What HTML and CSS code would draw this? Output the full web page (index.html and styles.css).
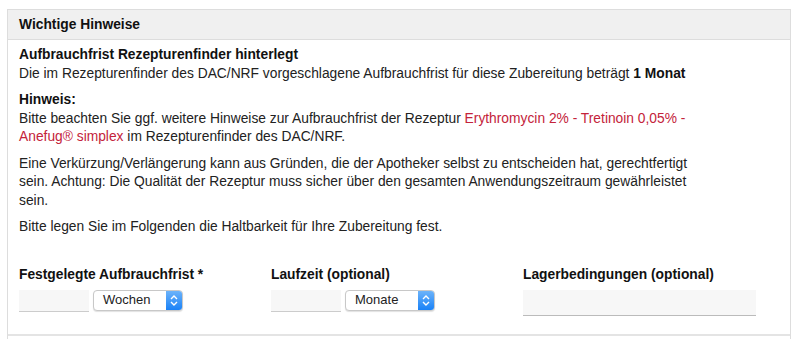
FILE: index.html
```html
<!DOCTYPE html>
<html lang="de">
<head>
  <meta charset="UTF-8" />
  <meta name="viewport" content="width=device-width, initial-scale=1.0">
  <title>Wichtige Hinweise</title>
  <link rel="stylesheet" href="styles.css">
</head>
<body>
  <div class="panel">
    <div class="panel-head">Wichtige Hinweise</div>

    <div class="panel-body">
      <p>
        <strong>Aufbrauchfrist Rezepturenfinder hinterlegt</strong><br>
        Die im Rezepturenfinder des DAC/NRF vorgeschlagene Aufbrauchfrist für diese Zubereitung beträgt <strong>1 Monat</strong>
      </p>

      <p>
        <strong>Hinweis:</strong><br>
        Bitte beachten Sie ggf. weitere Hinweise zur Aufbrauchfrist der Rezeptur <a href="#" class="rezeptur">Erythromycin 2% - Tretinoin 0,05% - Anefug® simplex</a> im Rezepturenfinder des DAC/NRF.
      </p>

      <p>Eine Verkürzung/Verlängerung kann aus Gründen, die der Apotheker selbst zu entscheiden hat, gerechtfertigt sein. Achtung: Die Qualität der Rezeptur muss sicher über den gesamten Anwendungszeitraum gewährleistet sein.</p>

      <p>Bitte legen Sie im Folgenden die Haltbarkeit für Ihre Zubereitung fest.</p>

      <div class="felder">
        <div class="feld">
          <label for="frist">Festgelegte Aufbrauchfrist *</label>
          <div class="zeile">
            <input type="text" id="frist" class="eingabe kurz">
            <div class="auswahl">
              <span>Wochen</span>
              <span class="pfeil">
                <svg width="8" height="11" viewBox="0 0 8 11"><path d="M1 4 L4 1 L7 4 M1 7 L4 10 L7 7" fill="none" stroke="#fff" stroke-width="1.4"/></svg>
              </span>
            </div>
          </div>
        </div>

        <div class="feld">
          <label for="laufzeit">Laufzeit (optional)</label>
          <div class="zeile">
            <input type="text" id="laufzeit" class="eingabe kurz">
            <div class="auswahl">
              <span>Monate</span>
              <span class="pfeil">
                <svg width="8" height="11" viewBox="0 0 8 11"><path d="M1 4 L4 1 L7 4 M1 7 L4 10 L7 7" fill="none" stroke="#fff" stroke-width="1.4"/></svg>
              </span>
            </div>
          </div>
        </div>

        <div class="feld">
          <label for="lager">Lagerbedingungen (optional)</label>
          <div class="zeile">
            <input type="text" id="lager" class="eingabe lang">
          </div>
        </div>
      </div>
    </div>
  </div>
  <div class="naechster"></div>
</body>
</html>
```

FILE: styles.css
```css
* {
  box-sizing: border-box;
  margin: 0;
  padding: 0;
}

body {
  font-family: 'Liberation Sans', Arial, sans-serif;
  font-size: 13.8px;
  line-height: 18.5px;
  color: #222;
  background-color: #fff;
  padding: 9px 9px 0 7px;
}

.panel {
  width: 784px;
  border: 1px solid #ddd;
  border-bottom: none;
}

.panel-head {
  height: 30px;
  line-height: 29px;
  padding: 0 11px;
  background-color: #f0f0f0;
  border-bottom: 1px solid #ddd;
  font-weight: bold;
  color: #111;
}

.panel-body {
  padding: 6px 11px 18px 11px;
  border-bottom: 2px solid #e4e4e4;
}

.panel-body p {
  margin-bottom: 8px;
  max-width: 690px;
}

strong {
  color: #111;
}

.rezeptur {
  color: #c4233a;
  text-decoration: none;
}

.felder {
  display: grid;
  grid-template-columns: 252px 252px 252px;
  margin-top: 29px;
}

label {
  display: block;
  font-weight: bold;
  color: #111;
  margin-bottom: 6px;
}

.zeile {
  display: flex;
  align-items: flex-start;
  gap: 4px;
}

.eingabe {
  height: 22px;
  border: none;
  border-bottom: 1px solid #ccc;
  background-color: #f7f7f7;
  font-family: inherit;
  font-size: 13px;
}

.kurz {
  width: 70px;
}

.lang {
  width: 233px;
  height: 26px;
  border-bottom: 1px solid #bbb;
}

.auswahl {
  display: flex;
  align-items: center;
  width: 90px;
  height: 21px;
  border: 1px solid #c8c8c8;
  border-radius: 4px;
  background-color: #fff;
  box-shadow: 0 1px 1px rgba(0, 0, 0, 0.12);
  overflow: hidden;
  font-size: 13px;
}

.auswahl span:first-child {
  flex: 1;
  padding-left: 9px;
  color: #222;
}

.pfeil {
  width: 16px;
  height: 100%;
  display: flex;
  align-items: center;
  justify-content: center;
  background: linear-gradient(#6cb3fa, #1a82f7);
}

.naechster {
  width: 784px;
  height: 10px;
  border-left: 1px solid #ddd;
  border-right: 1px solid #ddd;
}
```
